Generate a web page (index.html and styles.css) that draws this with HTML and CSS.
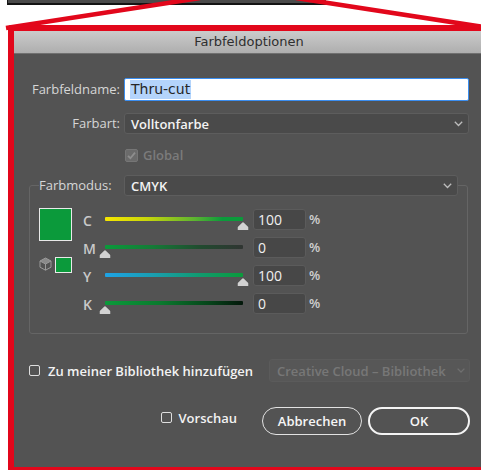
FILE: index.html
```html
<!DOCTYPE html>
<html lang="de">
<head>
<meta charset="utf-8">
<title>Farbfeldoptionen</title>
<link rel="stylesheet" href="styles.css">
</head>
<body>
<div class="topbar"></div>
<svg class="callout" width="481" height="32" viewBox="0 0 481 32">
  <line x1="6" y1="28" x2="200" y2="-2" />
  <line x1="296" y1="-2" x2="490" y2="28" />
</svg>

<div class="frame">
  <div class="dialog">
    <div class="titlebar">Farbfeldoptionen</div>

    <div class="content">
      <div class="field-row name-row">
        <label class="label">Farbfeldname:</label>
        <div class="text-input"><span class="selection">Thru-cut</span></div>
      </div>

      <div class="field-row type-row">
        <label class="label">Farbart:</label>
        <div class="select">
          <span>Volltonfarbe</span>
          <svg class="chevron" width="9" height="6" viewBox="0 0 9 6"><polyline points="0.8,0.8 4.5,4.5 8.2,0.8"/></svg>
        </div>
      </div>

      <div class="global-row">
        <span class="checkbox checked disabled">
          <svg width="11" height="11" viewBox="0 0 11 11"><polyline points="2,5.8 4.4,8.2 9,2.6"/></svg>
        </span>
        <span class="global-label">Global</span>
      </div>

      <div class="group">
        <div class="group-head">
          <span class="group-label">Farbmodus:</span>
          <div class="select mode-select">
            <span>CMYK</span>
            <svg class="chevron" width="9" height="6" viewBox="0 0 9 6"><polyline points="0.8,0.8 4.5,4.5 8.2,0.8"/></svg>
          </div>
        </div>

        <div class="group-body">
          <div class="swatches">
            <div class="swatch-big"></div>
            <div class="swatch-small-row">
              <svg class="cube" width="13" height="14" viewBox="0 0 13 14">
                <path class="cube-top" d="M6.5 1 L12 4 L6.5 7 L1 4 Z"/>
                <path class="cube-edge" d="M6.5 1 L12 4 V10.2 L6.5 13.2 L1 10.2 V4 Z M1 4 L6.5 7 L12 4 M6.5 7 V13.2"/>
              </svg>
              <div class="swatch-small"></div>
            </div>
          </div>

          <div class="channels">
            <div class="channel">
              <span class="ch-label">C</span>
              <div class="slider">
                <div class="track track-c"></div>
                <svg class="thumb" style="left:100%" width="11" height="8" viewBox="0 0 11 8"><path d="M5.5 0.3 Q6.1 0.3 6.6 0.9 L11 5.2 V8 H0 V5.2 L4.4 0.9 Q4.9 0.3 5.5 0.3 Z"/></svg>
              </div>
              <div class="num">100</div>
              <span class="pct">%</span>
            </div>
            <div class="channel">
              <span class="ch-label">M</span>
              <div class="slider">
                <div class="track track-m"></div>
                <svg class="thumb" style="left:0%" width="11" height="8" viewBox="0 0 11 8"><path d="M5.5 0.3 Q6.1 0.3 6.6 0.9 L11 5.2 V8 H0 V5.2 L4.4 0.9 Q4.9 0.3 5.5 0.3 Z"/></svg>
              </div>
              <div class="num">0</div>
              <span class="pct">%</span>
            </div>
            <div class="channel">
              <span class="ch-label">Y</span>
              <div class="slider">
                <div class="track track-y"></div>
                <svg class="thumb" style="left:100%" width="11" height="8" viewBox="0 0 11 8"><path d="M5.5 0.3 Q6.1 0.3 6.6 0.9 L11 5.2 V8 H0 V5.2 L4.4 0.9 Q4.9 0.3 5.5 0.3 Z"/></svg>
              </div>
              <div class="num">100</div>
              <span class="pct">%</span>
            </div>
            <div class="channel">
              <span class="ch-label">K</span>
              <div class="slider">
                <div class="track track-k"></div>
                <svg class="thumb" style="left:0%" width="11" height="8" viewBox="0 0 11 8"><path d="M5.5 0.3 Q6.1 0.3 6.6 0.9 L11 5.2 V8 H0 V5.2 L4.4 0.9 Q4.9 0.3 5.5 0.3 Z"/></svg>
              </div>
              <div class="num">0</div>
              <span class="pct">%</span>
            </div>
          </div>
        </div>
      </div>

      <div class="library-row">
        <span class="checkbox"></span>
        <span class="check-label">Zu meiner Bibliothek hinzufügen</span>
        <div class="select library-select">
          <span>Creative Cloud – Bibliothek</span>
          <svg class="chevron" width="8" height="5" viewBox="0 0 8 5"><polyline points="0.6,0.6 4,4 7.4,0.6"/></svg>
        </div>
      </div>

      <div class="actions">
        <div class="preview">
          <span class="checkbox"></span>
          <span class="check-label">Vorschau</span>
        </div>
        <button class="btn">Abbrechen</button>
        <button class="btn btn-default">OK</button>
      </div>
    </div>
  </div>
</div>
</body>
</html>
```

FILE: styles.css
```css
html, body {
  margin: 0;
  height: 100%;
  overflow: hidden;
  background: #fff;
}

body {
  position: relative;
  font-family: "Open Sans", "Liberation Sans", sans-serif;
  font-size: 13px;
}

/* edge of the application window above the callout */
.topbar {
  margin-left: 7px;
  width: 318px;
  height: 3px;
  background: #4b4b4b;
  border-left: 1px solid #161616;
  border-bottom: 2px solid #141414;
}

/* red callout lines leading into the framed dialog */
.callout {
  position: absolute;
  left: 0;
  top: 0;
  pointer-events: none;
}

.callout line {
  stroke: #e2071b;
  stroke-width: 4.5;
}

.frame {
  margin: 20px 0 0 8px;
  width: 470px;
  height: 436px;
  border: 6px solid #e2071b;
  border-radius: 3px 0 0 0;
  background: #535353;
}

.titlebar {
  height: 22px;
  line-height: 22px;
  border-bottom: 1px solid #707070;
  background: linear-gradient(#cbcbcb, #aeaeae);
  font-family: "DejaVu Sans", "Liberation Sans", sans-serif;
  font-size: 13px;
  color: #2f2f2f;
  text-align: center;
}

.content {
  padding: 24px 14px 0 15px;
  color: #d3d3d3;
}

/* label + control rows */
.field-row {
  display: grid;
  grid-template-columns: 91px 1fr;
  column-gap: 4px;
  margin-right: 1px;
}

.label {
  text-align: right;
  color: #d6d6d6;
}

.name-row .label {
  line-height: 23px;
}

.type-row {
  margin-top: 12px;
}

.type-row .label {
  line-height: 21px;
}

.text-input {
  height: 23px;
  box-sizing: border-box;
  background: #fff;
  border: 1px solid #3b8ef0;
  border-radius: 2px;
  padding: 1px 0 0 5px;
  line-height: 19px;
  font-family: "DejaVu Sans", "Liberation Sans", sans-serif;
  font-size: 14px;
  color: #262626;
}

.selection {
  background: #b4d4fb;
  display: inline-block;
  padding: 0 1px;
}

.select {
  height: 21px;
  box-sizing: border-box;
  display: flex;
  align-items: center;
  justify-content: space-between;
  background: #4a4a4a;
  border: 1px solid #5d5d5d;
  border-radius: 3px;
  padding: 0 5px 0 6px;
  color: #f3f3f3;
  font-weight: 600;
}

.chevron polyline {
  fill: none;
  stroke: #bdbdbd;
  stroke-width: 1.3;
}

/* checkboxes */
.checkbox {
  width: 11px;
  height: 11px;
  box-sizing: border-box;
  border: 1px solid #dedede;
  border-radius: 2px;
  flex: none;
}

.checkbox.checked {
  width: 13px;
  height: 13px;
  border-color: #767676;
  background: #6b6b6b;
  display: flex;
}

.checkbox.checked polyline {
  fill: none;
  stroke: #8e8e8e;
  stroke-width: 1.8;
}

.global-row {
  margin-top: 14px;
  display: flex;
  align-items: center;
  padding-left: 96px;
  height: 14px;
}

.global-label {
  margin-left: 5px;
  color: #7b7b7b;
  font-weight: 600;
}

/* Farbmodus group box */
.group {
  margin: 23px 2px 0 0;
  border: 1px solid #656565;
  border-radius: 3px;
  padding: 0 9px 19px;
}

.group-head {
  display: flex;
  margin-top: -11px;
  height: 21px;
}

.group-label {
  width: 85px;
  flex: none;
  background: #535353;
  line-height: 21px;
  color: #d6d6d6;
}

.mode-select {
  flex: 1;
}

.group-body {
  margin-top: 12px;
  display: flex;
}

.swatches {
  width: 33px;
  flex: none;
}

.swatch-big {
  width: 33px;
  height: 33px;
  box-sizing: border-box;
  border: 1px solid #e9e9e9;
  background: #0b9a3b;
}

.swatch-small-row {
  margin-top: 16px;
  display: flex;
  align-items: flex-start;
}

.cube {
  margin: 0 3px 0 0;
}

.cube-top {
  fill: #8a8a8a;
}

.cube-edge {
  fill: none;
  stroke: #9a9a9a;
  stroke-width: 1;
  stroke-linejoin: round;
}

.swatch-small {
  width: 17px;
  height: 16px;
  box-sizing: border-box;
  border: 1px solid #e9e9e9;
  background: #0b9a3b;
}

.channels {
  margin-left: 11px;
  padding-top: 1px;
  display: flex;
  flex-direction: column;
  gap: 7px;
}

.channel {
  display: flex;
  align-items: flex-start;
  height: 21px;
}

.ch-label {
  width: 22px;
  flex: none;
  line-height: 23px;
  font-weight: 600;
  font-size: 14px;
  color: #c9c9c9;
}

.slider {
  position: relative;
  width: 138px;
  height: 21px;
  flex: none;
}

.track {
  margin-top: 8px;
  height: 4px;
  border-radius: 1px;
}

.track-c { background: linear-gradient(90deg, #f7e600 0%, #c9d60a 30%, #5cb331 65%, #0b9a3b 85%, #0b9a3b 100%); }
.track-m { background: linear-gradient(90deg, #0b9a3b 0%, #157a37 35%, #214a2f 70%, #303532 100%); }
.track-y { background: linear-gradient(90deg, #1ea3e6 0%, #1a9eb0 35%, #109a6c 70%, #0b9a3b 100%); }
.track-k { background: linear-gradient(90deg, #0b9a3b 0%, #0a7a2e 40%, #06451a 75%, #03170a 100%); }

.thumb {
  position: absolute;
  top: 13px;
  transform: translateX(-50%);
}

.thumb path {
  fill: #d2d2d2;
}

.num {
  width: 53px;
  height: 21px;
  box-sizing: border-box;
  margin-left: 10px;
  flex: none;
  background: #474747;
  border: 1px solid #5b5b5b;
  border-radius: 3px;
  padding-left: 4px;
  line-height: 19px;
  font-size: 14px;
  color: #f0f0f0;
}

.pct {
  margin-left: 3px;
  line-height: 21px;
  font-weight: 600;
  color: #cfcfcf;
}

/* library row */
.library-row {
  margin-top: 25px;
  height: 23px;
  display: flex;
  align-items: center;
}

.check-label {
  margin-left: 8px;
  color: #f2f2f2;
  font-weight: 600;
}

.library-select {
  margin-left: auto;
  width: 201px;
  height: 23px;
  background: #575757;
  border-color: #5b5b5b;
  color: #777;
  padding: 0 4px 0 7px;
}

.library-select .chevron polyline {
  stroke: #6f6f6f;
}

/* dialog buttons */
.actions {
  margin-top: 25px;
  height: 28px;
  display: flex;
  justify-content: flex-end;
  align-items: center;
}

.preview {
  display: flex;
  align-items: center;
  margin: 0 25px 7px 0;
}

.preview .check-label {
  margin-left: 7px;
}

.btn {
  height: 28px;
  width: 100px;
  box-sizing: border-box;
  border: 1.5px solid #e2e2e2;
  border-radius: 14px;
  background: transparent;
  color: #f6f6f6;
  font-family: "Open Sans", "Liberation Sans", sans-serif;
  font-size: 13px;
  font-weight: 600;
  padding: 0;
}

.btn-default {
  width: 102px;
  margin-left: 6px;
  border: 2px solid #f4f4f4;
}
```
